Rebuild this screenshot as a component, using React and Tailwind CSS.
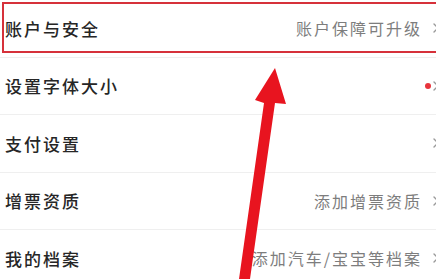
import { ChevronRight } from "lucide-react";

const rows = [
  { title: "账户与安全", hint: "账户保障可升级" },
  { title: "设置字体大小", hint: "", dot: true },
  { title: "支付设置", hint: "" },
  { title: "增票资质", hint: "添加增票资质" },
  { title: "我的档案", hint: "添加汽车/宝宝等档案" },
];

function Row({ title, hint, dot }) {
  return (
    <div className="flex h-[57.5px] items-center justify-between border-b border-[#efefef] pl-[5px]">
      <span className="text-[17px] font-medium tracking-[2px] text-[#262626]">{title}</span>
      <div className="flex items-center">
        {hint && <span className="text-[16px] tracking-[2px] text-[#7d7d7d]">{hint}</span>}
        {dot && <span className="-mr-[3px] h-[6px] w-[6px] rounded-full bg-[#e8343c]" />}
        <ChevronRight
          className={`${dot ? "ml-0" : "ml-[6px]"} -mr-[8px] h-[16px] w-[16px] shrink-0 text-[#9a9a9a]`}
          strokeWidth={2}
        />
      </div>
    </div>
  );
}

export default function App() {
  return (
    <div
      className="relative h-[279px] w-[436px] overflow-hidden bg-white"
      style={{ fontFamily: '"Noto Sans CJK SC", "Noto Sans", sans-serif' }}
    >
      <div className="w-full">
        {rows.map((r) => (
          <Row key={r.title} {...r} />
        ))}
      </div>

      {/* highlight box */}
      <div className="absolute left-[2px] top-[2px] h-[51px] w-[440px] border-2 border-[#d6313a]" />

      {/* arrow */}
      <svg className="absolute left-0 top-0" width="436" height="279" viewBox="0 0 436 279">
        <polygon points="239,279 250,279 275,103 286,104 275,68 255,100 264,103" fill="#e8141f" />
      </svg>
    </div>
  );
}
